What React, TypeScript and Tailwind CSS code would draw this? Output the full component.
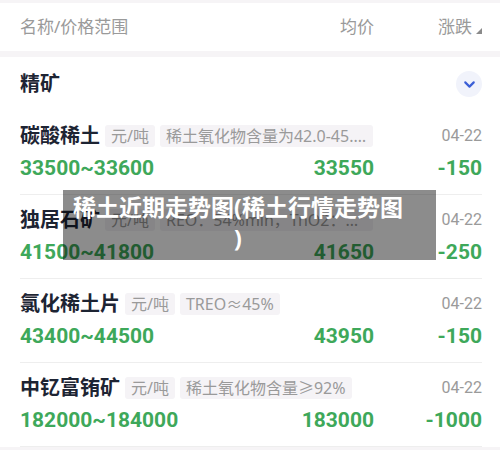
import { ChevronDown } from "lucide-react";

interface Item {
  name: string;
  unit: string;
  spec: string;
  date: string;
  range: string;
  avg: string;
  change: string;
}

const items: Item[] = [
  {
    name: "碳酸稀土",
    unit: "元/吨",
    spec: "稀土氧化物含量为42.0-45.0%",
    date: "04-22",
    range: "33500~33600",
    avg: "33550",
    change: "-150",
  },
  {
    name: "独居石矿",
    unit: "元/吨",
    spec: "REO：54%min，TnO2：0.1%max",
    date: "04-22",
    range: "41500~41800",
    avg: "41650",
    change: "-250",
  },
  {
    name: "氯化稀土片",
    unit: "元/吨",
    spec: "TREO≈45%",
    date: "04-22",
    range: "43400~44500",
    avg: "43950",
    change: "-150",
  },
  {
    name: "中钇富铕矿",
    unit: "元/吨",
    spec: "稀土氧化物含量≥92%",
    date: "04-22",
    range: "182000~184000",
    avg: "183000",
    change: "-1000",
  },
];

const cjk = { fontFamily: '"Noto Sans", "Noto Sans CJK SC", sans-serif' };
const num = { fontFamily: 'Roboto, "Noto Sans CJK SC", sans-serif' };

function Row({ item }: { item: Item }) {
  return (
    <div className="border-b border-[#eeeeee] pt-[11px] pb-[11px]">
      {/* name + tags + date */}
      <div className="flex h-[28px] items-center">
        <span className="text-[20px] font-bold text-[#1d2433] whitespace-nowrap" style={cjk}>
          {item.name}
        </span>
        <span
          className="ml-[5px] rounded-[3px] bg-[#f5f3f6] px-[6px] text-[16px] leading-[22px] text-[#9a9a9a] whitespace-nowrap"
          style={cjk}
        >
          {item.unit}
        </span>
        <span
          className="ml-[5px] max-w-[213px] truncate rounded-[3px] bg-[#f5f3f6] px-[6px] text-[16px] leading-[22px] text-[#9a9a9a]"
          style={cjk}
        >
          {item.spec}
        </span>
        <span className="ml-auto text-[16px] text-[#9a9a9a]" style={num}>
          {item.date}
        </span>
      </div>
      {/* prices */}
      <div className="mt-[5px] flex h-[28px] items-center text-[21px] font-bold text-[#3ea85a]" style={num}>
        <span className="flex-1">{item.range}</span>
        <span className="text-right">{item.avg}</span>
        <span className="w-[108px] text-right">{item.change}</span>
      </div>
    </div>
  );
}

export default function App() {
  return (
    <div className="relative h-[450px] w-[500px] overflow-hidden bg-[#f6f4f6]">
      <div className="h-[3px]" />

      {/* Table header */}
      <div className="flex h-[48px] items-center bg-white pl-5 pr-[18px] text-[17px] text-[#9a9a9a]" style={cjk}>
        <span className="flex-1">名称/价格范围</span>
        <span>均价</span>
        <span className="flex w-[108px] items-center justify-end">
          涨跌
          <svg width="6" height="6" viewBox="0 0 6 6" className="ml-[4px] mt-[8px]">
            <polygon points="6,0 6,6 0,6" fill="#8a8a8a" />
          </svg>
        </span>
      </div>

      <div className="h-[6px]" />

      {/* Section */}
      <div className="bg-white pl-5 pr-[18px]">
        <div className="flex h-[54px] items-center justify-between">
          <span className="text-[20px] font-bold text-[#1d2433]" style={cjk}>
            精矿
          </span>
          <span className="flex h-[26px] w-[26px] items-center justify-center rounded-full bg-[#f1f3fb]">
            <ChevronDown size={17} strokeWidth={3} className="text-[#3b5fd6]" />
          </span>
        </div>
        {items.map((item) => (
          <Row key={item.name} item={item} />
        ))}
      </div>

      {/* Overlay caption */}
      <div className="absolute left-[63px] top-[190px] h-[70px] w-[373px] bg-black/45 pl-[10px] pt-[2px]">
        <div className="w-[330px] text-center text-[23px] font-bold leading-[31px] text-white whitespace-nowrap" style={cjk}>
          稀土近期走势图(稀土行情走势图
          <br />)
        </div>
      </div>
    </div>
  );
}
